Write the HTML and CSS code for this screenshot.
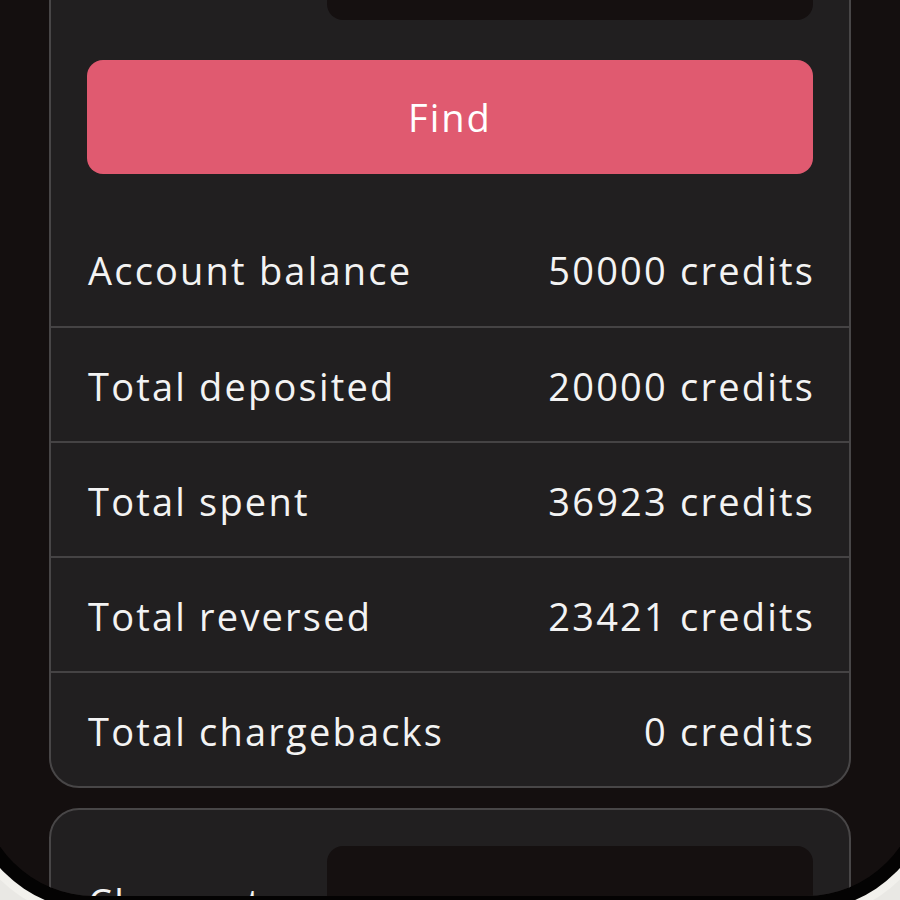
FILE: index.html
```html
<!DOCTYPE html>
<html lang="en">
<head>
<meta charset="utf-8">
<title>Account</title>
<link rel="stylesheet" href="styles.css">
</head>
<body>
<div class="device">
  <div class="bezel">
    <div class="screen">
      <div class="scroll">
        <section class="card">
          <div class="field-row">
            <span class="field-label">Account</span>
            <div class="field-input"></div>
          </div>
          <div class="actions">
            <button class="btn-find" type="button">Find</button>
          </div>
          <ul class="stats">
            <li class="stat"><span>Account balance</span><span>50000 credits</span></li>
            <li class="stat"><span>Total deposited</span><span>20000 credits</span></li>
            <li class="stat"><span>Total spent</span><span>36923 credits</span></li>
            <li class="stat"><span>Total reversed</span><span>23421 credits</span></li>
            <li class="stat"><span>Total chargebacks</span><span>0 credits</span></li>
          </ul>
        </section>
        <section class="card card-next">
          <div class="field-row">
            <span class="field-label">Change to</span>
            <div class="field-input field-input-tall"></div>
          </div>
        </section>
      </div>
    </div>
  </div>
</div>
</body>
</html>
```

FILE: styles.css
```css
* { box-sizing: border-box; }

html, body {
  margin: 0;
  padding: 0;
}

body {
  width: 900px;
  height: 900px;
  overflow: hidden;
  background: #e9e8e4;
  font-family: "Open Sans", "Liberation Sans", sans-serif;
  color: #f3f3f3;
}

.device {
  width: 980px;
  margin-left: -40px;
  padding: 0 8px 8px 8px;
  border-radius: 0 0 134px 134px;
  background: linear-gradient(180deg, #8d8a82 0%, #d8d6cf 60%, #f4f3ef 100%);
}

.bezel {
  padding: 0 12px 14px 12px;
  border-radius: 0 0 126px 126px;
  background: #040303;
}

.screen {
  height: 896px;
  overflow: hidden;
  border-radius: 0 0 114px 114px;
  background: #140f0f;
}

.scroll {
  margin-top: -156px;
}

.card {
  width: 802px;
  margin: 0 auto;
  border: 2px solid #484647;
  border-radius: 30px;
  background: #211f20;
  padding-top: 36px;
}

.card-next {
  margin-top: 20px;
}

.field-row {
  display: flex;
  align-items: center;
  justify-content: space-between;
  padding: 0 36px 0 37px;
}

.field-label {
  font-size: 38px;
  letter-spacing: 2.2px;
}

.field-input {
  width: 486px;
  height: 138px;
  border-radius: 16px;
  background: #151010;
}

.field-input-tall {
  height: 112px;
}

.actions {
  padding: 40px 36px 0 36px;
}

.btn-find {
  display: block;
  width: 100%;
  height: 114px;
  border: 0;
  border-radius: 16px;
  background: #e05a70;
  color: #ffffff;
  font-family: inherit;
  font-size: 38px;
  font-weight: 500;
  letter-spacing: 2px;
  cursor: pointer;
}

.stats {
  list-style: none;
  margin: 37px 0 0 0;
  padding: 0;
}

.stat {
  height: 115px;
  display: flex;
  align-items: center;
  justify-content: space-between;
  padding: 3px 34px 0 37px;
  font-size: 38px;
  letter-spacing: 2.2px;
  border-top: 2px solid #454344;
}

.stat:first-child {
  border-top: 0;
}
```
